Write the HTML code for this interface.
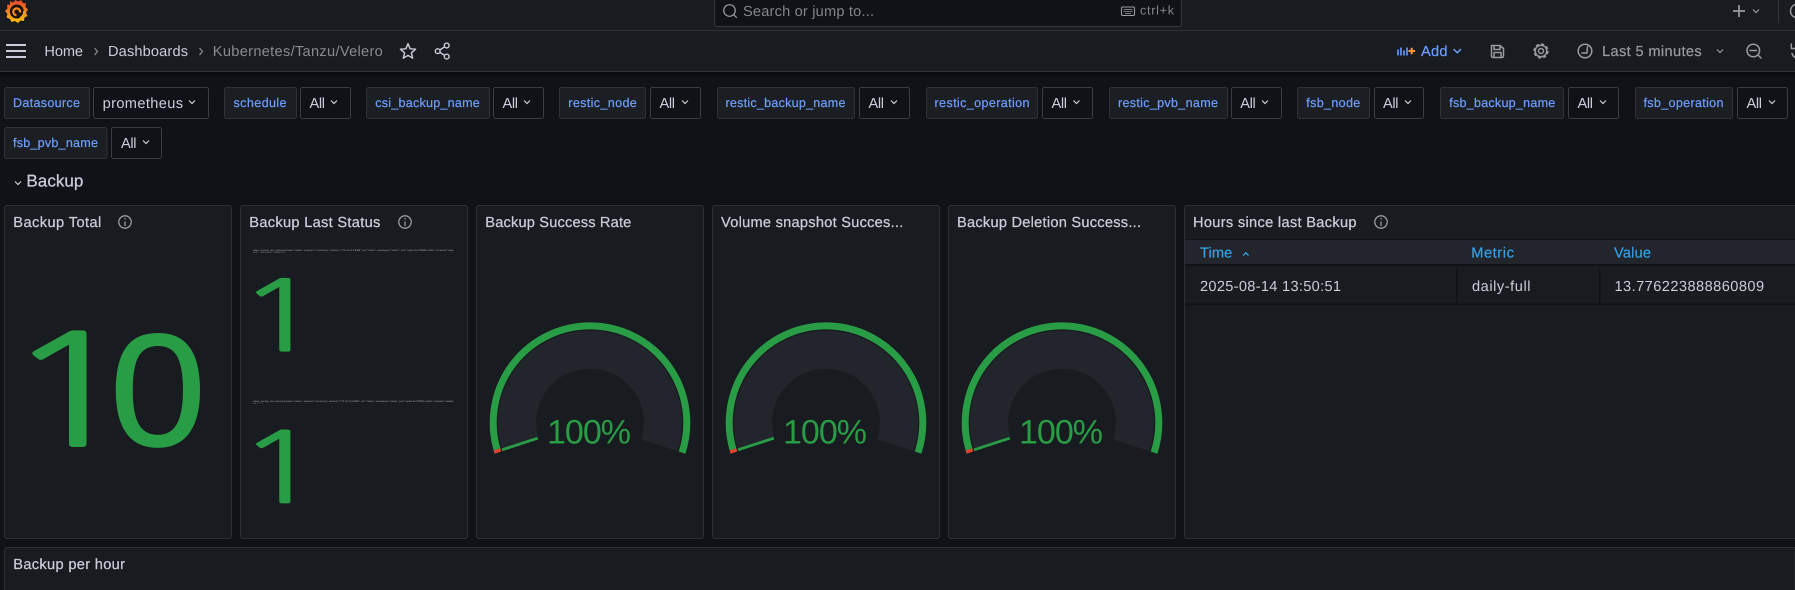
<!DOCTYPE html>
<html lang="en"><head><meta charset="utf-8"><title>Kubernetes/Tanzu/Velero</title>
<style>
html,body{margin:0;padding:0;background:#111217;width:1795px;height:590px;overflow:hidden}
svg{display:block}
text{font-family:"Liberation Sans",Arial,sans-serif;fill:#ccccdc;font-size:14.6px;text-rendering:geometricPrecision}
.t{stroke:#ccccdc;stroke-width:.25}
.l{font-size:12.6px;fill:#6e9fff;stroke:#6e9fff;stroke-width:.2}
.v{font-size:14.6px}
.p{fill:#181b1f;stroke:#2b2e33;stroke-width:1}
.lb{fill:#1b1e23;stroke:#2e3136;stroke-width:1}
.vb{fill:#111217;stroke:#3a3d43;stroke-width:1}
.ch{fill:none;stroke:#ccccdc;stroke-width:1.2}
.ic{fill:none;stroke:#9a9aa3;stroke-width:1.5;stroke-linecap:round;stroke-linejoin:round}
.h{fill:#33a2e5;stroke:#33a2e5;stroke-width:.2}
.i{fill:none;stroke:#9a9aa3;stroke-width:1.3}
.m{font-size:2.3px;fill:#a5a5b5}
.n{font-family:"NanumGothic","Liberation Sans",sans-serif;fill:#299c46;stroke:#299c46}
</style></head><body>
<svg xmlns="http://www.w3.org/2000/svg" width="1795" height="590" viewBox="0 0 1795 590">
<defs>
<linearGradient id="lg" x1="0" y1="0" x2="0" y2="1"><stop offset="0" stop-color="#e8432a"/><stop offset="1" stop-color="#fcc60d"/></linearGradient>
<linearGradient id="sh" x1="0" y1="0" x2="0" y2="1"><stop offset="0" stop-color="#08090c"/><stop offset="1" stop-color="#111217"/></linearGradient>
</defs>
<rect width="1795" height="590" fill="#111217"/>
<rect width="1795" height="71" fill="#181b1f"/>
<rect y="72" width="1795" height="6" fill="url(#sh)"/>
<rect y="30" width="1795" height="1" fill="#2f3237"/>
<rect y="71" width="1795" height="1" fill="#2f3237"/>
<!-- logo -->
<polygon fill="url(#lg)" points="10,1 13,2.5 15.5,0 18.5,1.5 21,0 23,3 26,3.5 25.5,7 28,9.5 26,12.5 27.5,16 24.5,17.5 24,21 20.5,20.5 18,23 15,21 11.5,22 10,19 6.5,17.5 7.5,14 5,11 7.5,8.5 7,5 10,4.5"/>
<circle cx="16.8" cy="11.5" r="7" fill="#1c140c"/>
<path d="M20 12.5A3.4 3.4 0 1 0 16.5 15.2" fill="none" stroke="#f68a1f" stroke-width="2.2"/>
<path d="M24 11A7.4 7.4 0 0 1 20 18" fill="none" stroke="#f9a818" stroke-width="1.6"/>
<!-- search -->
<path d="M714.5 0V24.5a2 2 0 0 0 2 2H1179.5a2 2 0 0 0 2-2V0" fill="#111217" stroke="#35383d"/>
<circle cx="729.5" cy="10.5" r="5.8" class="ic" style="stroke-width:1.2"/>
<path d="M733.7 14.7L736.5 17.5" class="ic" style="stroke-width:1.2"/>
<text x="743" y="16" textLength="131" style="fill:#85858f">Search or jump to...</text>
<rect x="1121.5" y="7" width="13" height="8.5" rx="1.2" class="i" style="stroke-width:1.1"/>
<path d="M1123.5 9.5h9M1123.5 11.5h9M1125 13.5h6" fill="none" stroke="#9a9aa3" stroke-width=".8"/>
<text x="1140" y="14.7" textLength="34" style="font-size:12.6px;fill:#85858f">ctrl+k</text>
<!-- top right -->
<path d="M1733 11H1745M1739 5V17" fill="none" stroke="#9a9aa3" stroke-width="1.7"/>
<path class="ch" style="stroke:#9a9aa3" d="M1753 9.5L1756 12.5L1759 9.5"/>
<rect x="1778" y="0" width="1" height="23" fill="#33363b"/>
<path class="ic" d="M1795 4.6A6.8 6.8 0 0 0 1795 17.4"/>
<!-- nav -->
<path d="M6 45H26M6 51H26M6 57H26" stroke="#ccccdc" stroke-width="2" fill="none"/>
<text x="44.4" y="56" textLength="38.6">Home</text>
<path d="M94.5 48L97.5 51.5L94.5 55" fill="none" stroke="#8e8e96" stroke-width="1.2"/>
<text x="108" y="56" textLength="80">Dashboards</text>
<path d="M199.5 48L202.5 51.5L199.5 55" fill="none" stroke="#8e8e96" stroke-width="1.2"/>
<text x="212.8" y="56" textLength="170" style="fill:#8a8a94">Kubernetes/Tanzu/Velero</text>
<polygon points="408,43.7 410.1,48.8 415.6,49.2 411.4,52.8 412.7,58.2 408,55.3 403.3,58.2 404.6,52.8 400.4,49.2 405.9,48.8" fill="none" stroke="#ccccdc" stroke-width="1.4" stroke-linejoin="round"/>
<g fill="none" stroke="#ccccdc" stroke-width="1.4"><circle cx="437.7" cy="51.2" r="2.4"/><circle cx="446.7" cy="45.5" r="2.4"/><circle cx="446.7" cy="56.6" r="2.4"/><path d="M439.8 50L444.6 46.8M439.8 52.4L444.6 55.3"/></g>
<!-- nav right -->
<path d="M1398 55.5V49.5M1401 55.5V47.5M1404 55.5V50.5M1407 55.5V47.5" stroke="#5c8fe8" stroke-width="1.8" fill="none"/>
<path d="M1408.5 51H1415M1411.7 47.8V54.2" stroke="#ff9830" stroke-width="2" fill="none"/>
<text x="1421" y="56" textLength="26.5" style="fill:#6e9fff;stroke:#6e9fff;stroke-width:.2">Add</text>
<path d="M1453.5 49L1457.3 52.8L1461 49" fill="none" stroke="#6e9fff" stroke-width="1.4"/>
<path class="ic" d="M1491.5 45.5H1500L1503.5 48.5V56A1.5 1.5 0 0 1 1502 57.5H1493A1.5 1.5 0 0 1 1491.5 56ZM1494 45.5V49.5H1500V45.5M1494 57.5V52.5H1501V57.5"/>
<circle cx="1541" cy="51" r="2.5" class="ic"/>
<circle cx="1541" cy="51" r="5.8" class="ic"/>
<circle cx="1541" cy="51" r="6.9" fill="none" stroke="#9a9aa3" stroke-width="1.6" stroke-dasharray="3 2.42"/>
<circle cx="1585" cy="51" r="6.8" class="ic"/>
<path class="ic" d="M1587.5 46.8L1587 53H1582"/>
<text x="1602" y="56" textLength="99.7" style="fill:#9a9aa3;stroke:#9a9aa3;stroke-width:.2">Last 5 minutes</text>
<path class="ch" style="stroke:#9a9aa3" d="M1717 49.5L1720 52.5L1723 49.5"/>
<circle cx="1753.3" cy="50.5" r="6.3" class="ic"/>
<path class="ic" d="M1750 50.5H1756.6M1758 55L1761 58"/>
<path class="ic" d="M1791.3 44V48.5H1795M1792 53.5A6.8 6.8 0 0 0 1795 57.5"/>
<!-- variables row 1 -->
<rect x="4.5" y="87.5" width="85" height="31" rx="2" class="lb"/><text class="l" x="13" y="106.8" textLength="67">Datasource</text>
<rect x="93.5" y="87.5" width="115" height="31" rx="2" class="vb"/><text class="v" x="102.6" y="107.8" textLength="80.4">prometheus</text><path class="ch" d="M189 100.5L192 103.5L195 100.5"/>
<rect x="224.5" y="87.5" width="72" height="31" rx="2" class="lb"/><text class="l" x="233.5" y="106.8" textLength="53">schedule</text>
<rect x="300.5" y="87.5" width="50" height="31" rx="2" class="vb"/><text class="v" x="309.5" y="107.8" textLength="15.5">All</text><path class="ch" d="M331 100.5L334 103.5L337 100.5"/>
<rect x="366.5" y="87.5" width="123" height="31" rx="2" class="lb"/><text class="l" x="375.3" y="106.8" textLength="104.5">csi_backup_name</text>
<rect x="493.5" y="87.5" width="50" height="31" rx="2" class="vb"/><text class="v" x="502.5" y="107.8" textLength="15.5">All</text><path class="ch" d="M524 100.5L527 103.5L530 100.5"/>
<rect x="559.5" y="87.5" width="86" height="31" rx="2" class="lb"/><text class="l" x="568.3" y="106.8" textLength="68.5">restic_node</text>
<rect x="650.5" y="87.5" width="50" height="31" rx="2" class="vb"/><text class="v" x="659.5" y="107.8" textLength="15.5">All</text><path class="ch" d="M682 100.5L685 103.5L688 100.5"/>
<rect x="717.5" y="87.5" width="137" height="31" rx="2" class="lb"/><text class="l" x="725.5" y="106.8" textLength="120">restic_backup_name</text>
<rect x="859.5" y="87.5" width="50" height="31" rx="2" class="vb"/><text class="v" x="868.5" y="107.8" textLength="15.5">All</text><path class="ch" d="M891 100.5L894 103.5L897 100.5"/>
<rect x="926.5" y="87.5" width="111" height="31" rx="2" class="lb"/><text class="l" x="934.5" y="106.8" textLength="95">restic_operation</text>
<rect x="1042.5" y="87.5" width="50" height="31" rx="2" class="vb"/><text class="v" x="1051.5" y="107.8" textLength="15.5">All</text><path class="ch" d="M1073.5 100.5L1076.5 103.5L1079.5 100.5"/>
<rect x="1109.5" y="87.5" width="118" height="31" rx="2" class="lb"/><text class="l" x="1118" y="106.8" textLength="100">restic_pvb_name</text>
<rect x="1231.5" y="87.5" width="50" height="31" rx="2" class="vb"/><text class="v" x="1240.3" y="107.8" textLength="15.5">All</text><path class="ch" d="M1262 100.5L1265 103.5L1268 100.5"/>
<rect x="1297.5" y="87.5" width="72" height="31" rx="2" class="lb"/><text class="l" x="1306.3" y="106.8" textLength="54">fsb_node</text>
<rect x="1374.5" y="87.5" width="49" height="31" rx="2" class="vb"/><text class="v" x="1383" y="107.8" textLength="15.5">All</text><path class="ch" d="M1405 100.5L1408 103.5L1411 100.5"/>
<rect x="1440.5" y="87.5" width="123" height="31" rx="2" class="lb"/><text class="l" x="1449.3" y="106.8" textLength="106">fsb_backup_name</text>
<rect x="1568.5" y="87.5" width="50" height="31" rx="2" class="vb"/><text class="v" x="1577.5" y="107.8" textLength="15.5">All</text><path class="ch" d="M1600 100.5L1603 103.5L1606 100.5"/>
<rect x="1635.5" y="87.5" width="97" height="31" rx="2" class="lb"/><text class="l" x="1643.5" y="106.8" textLength="80">fsb_operation</text>
<rect x="1737.5" y="87.5" width="50" height="31" rx="2" class="vb"/><text class="v" x="1746.5" y="107.8" textLength="15.5">All</text><path class="ch" d="M1769 100.5L1772 103.5L1775 100.5"/>
<!-- row 2 -->
<rect x="4.5" y="127.5" width="102.5" height="31" rx="2" class="lb"/><text class="l" x="13" y="146.8" textLength="85">fsb_pvb_name</text>
<rect x="111.5" y="127.5" width="50" height="31" rx="2" class="vb"/><text class="v" x="121" y="147.8" textLength="15.5">All</text><path class="ch" d="M143 140.5L146 143.5L149 140.5"/>
<!-- row heading -->
<path class="ch" d="M15 181.5L18 184.5L21 181.5"/>
<text x="26.4" y="186.7" textLength="57" class="t" style="font-size:17px">Backup</text>
<!-- panel 1 -->
<rect x="4.5" y="205.5" width="227" height="333" rx="2" class="p"/>
<text x="13.3" y="227" textLength="88" class="t">Backup Total</text>
<circle cx="125" cy="222" r="6.2" class="i"/><path d="M125 221.5V226M125 218V219.4" stroke="#9a9aa3" stroke-width="1.3" fill="none"/>
<text class="n" x="0" y="0" style="font-size:155px;stroke-width:1" transform="translate(0 446) scale(1.5 1)">1</text>
<text x="103" y="445.5" style="font-size:160px;fill:#299c46;stroke:#299c46;stroke-width:1.5" transform="translate(-1.4 0) scale(1.08 1)">0</text>
<!-- panel 2 -->
<rect x="240.5" y="205.5" width="227" height="333" rx="2" class="p"/>
<text x="249.3" y="227" textLength="131" class="t">Backup Last Status</text>
<circle cx="405" cy="222" r="6.2" class="i"/><path d="M405 221.5V226M405 218V219.4" stroke="#9a9aa3" stroke-width="1.3" fill="none"/>
<text class="m" x="253" y="250.8" textLength="201">velero_backup_last_status{container="velero", endpoint="monitoring", instance="172.16.10.5:8085", job="velero", namespace="velero", pod="velero-5c4f7f8f9b-x2k9d", schedule="daily-</text>
<text class="m" x="253" y="253" textLength="32">full", service="velero"}</text>
<text class="n" x="0" y="0" style="font-size:98px;stroke-width:.7" transform="translate(235.7 351) scale(1.5 1)">1</text>
<text class="m" x="253" y="401.8" textLength="201">velero_backup_last_status{container="velero", endpoint="monitoring", instance="172.16.10.6:8085", job="velero", namespace="velero", pod="velero-5c4f7f8f9b-x2k9d", schedule="weekly-</text>
<text class="m" x="253" y="404.2" textLength="10">full"}</text>
<text class="n" x="0" y="0" style="font-size:98px;stroke-width:.7" transform="translate(235.7 502.7) scale(1.5 1)">1</text>
<!-- gauge panels -->
<rect x="476.5" y="205.5" width="227" height="333" rx="2" class="p"/>
<text x="485.3" y="227" textLength="146" class="t">Backup Success Rate</text>
<g>
<path d="M520.57 445.26A73 73 0 1 1 659.43 445.26" fill="none" stroke="#22252b" stroke-width="38"/>
<path d="M502 449.8L537.8 438.2" stroke="#299c46" stroke-width="2.8"/>
<path d="M496.95 449.38A96.8 96.8 0 1 1 682.06 452.61" fill="none" stroke="#299c46" stroke-width="7"/>
<path d="M497.94 452.61A96.8 96.8 0 0 1 496.95 449.38" fill="none" stroke="#e0452f" stroke-width="7"/>
<text x="547" y="443.3" textLength="84" style="font-size:34px;fill:#299c46">100%</text>
</g>
<rect x="712.5" y="205.5" width="227" height="333" rx="2" class="p"/>
<text x="721" y="227" textLength="182.3" class="t">Volume snapshot Succes...</text>
<g transform="translate(236 0)">
<path d="M520.57 445.26A73 73 0 1 1 659.43 445.26" fill="none" stroke="#22252b" stroke-width="38"/>
<path d="M502 449.8L537.8 438.2" stroke="#299c46" stroke-width="2.8"/>
<path d="M496.95 449.38A96.8 96.8 0 1 1 682.06 452.61" fill="none" stroke="#299c46" stroke-width="7"/>
<path d="M497.94 452.61A96.8 96.8 0 0 1 496.95 449.38" fill="none" stroke="#e0452f" stroke-width="7"/>
<text x="547" y="443.3" textLength="84" style="font-size:34px;fill:#299c46">100%</text>
</g>
<rect x="948.5" y="205.5" width="227" height="333" rx="2" class="p"/>
<text x="957" y="227" textLength="184" class="t">Backup Deletion Success...</text>
<g transform="translate(472 0)">
<path d="M520.57 445.26A73 73 0 1 1 659.43 445.26" fill="none" stroke="#22252b" stroke-width="38"/>
<path d="M502 449.8L537.8 438.2" stroke="#299c46" stroke-width="2.8"/>
<path d="M496.95 449.38A96.8 96.8 0 1 1 682.06 452.61" fill="none" stroke="#299c46" stroke-width="7"/>
<path d="M497.94 452.61A96.8 96.8 0 0 1 496.95 449.38" fill="none" stroke="#e0452f" stroke-width="7"/>
<text x="547" y="443.3" textLength="84" style="font-size:34px;fill:#299c46">100%</text>
</g>
<!-- table panel -->
<path d="M1795 205.5H1186.5a2 2 0 0 0-2 2V536.5a2 2 0 0 0 2 2H1795" class="p"/>
<text x="1193" y="227" textLength="163.5" class="t">Hours since last Backup</text>
<circle cx="1381" cy="222" r="6.2" class="i"/><path d="M1381 221.5V226M1381 218V219.4" stroke="#9a9aa3" stroke-width="1.3" fill="none"/>
<rect x="1185" y="239" width="610" height="1" fill="#111217"/>
<rect x="1185" y="240" width="610" height="24" fill="#22252b"/>
<rect x="1185" y="264" width="610" height="2" fill="#111217"/>
<text x="1200" y="257.5" textLength="32.3" class="h">Time</text>
<path d="M1243 255.5L1245.8 252.8L1248.5 255.5" fill="none" stroke="#33a2e5" stroke-width="1.3"/>
<text x="1471.2" y="257.5" textLength="42.7" class="h">Metric</text>
<text x="1614" y="257.5" textLength="37" class="h">Value</text>
<rect x="1456" y="269" width="1.5" height="35" fill="#111217"/>
<rect x="1599" y="269" width="1.5" height="35" fill="#111217"/>
<rect x="1185" y="303.5" width="610" height="1.8" fill="#111217"/>
<text x="1200" y="291" textLength="141">2025-08-14 13:50:51</text>
<text x="1472" y="291" textLength="58.5">daily-full</text>
<text x="1614.5" y="291" textLength="149.6">13.776223888860809</text>
<!-- bottom panel -->
<path d="M4.5 590V549.5a2 2 0 0 1 2-2H1795V590" class="p"/>
<text x="13.3" y="569" textLength="111.7" class="t">Backup per hour</text>
</svg>
</body></html>
